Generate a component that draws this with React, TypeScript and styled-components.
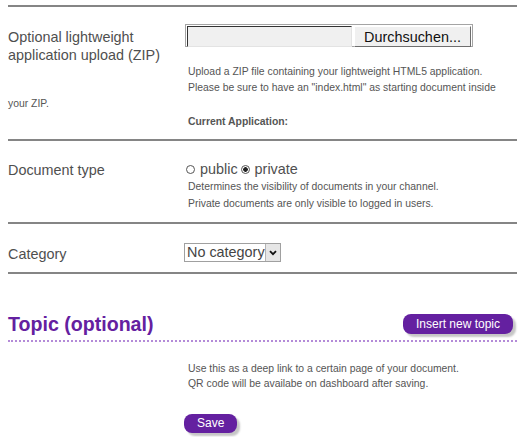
import React, { useRef, useState } from "react";
import styled, { createGlobalStyle } from "styled-components";

const colors = {
  label: "#4f4f4f",
  help: "#555555",
  rule: "#858585",
  purple: "#6420a0",
  dots: "#b48bd8",
  shadow: "#c6c6c6",
  control: "#f0f0f0",
};

const GlobalStyle = createGlobalStyle`
  body {
    margin: 0;
    background: #fff;
    font-family: "Liberation Sans", Arial, sans-serif;
  }
`;

const Page = styled.form`
  width: 509px;
  padding: 5px 7px 20px 8px;
`;

const Rule = styled.hr`
  margin: 0;
  height: 0;
  border: 0;
  border-top: 2px solid ${colors.rule};
`;

const Field = styled.div<{ $top: number; $bottom: number }>`
  display: flow-root;
  padding: ${({ $top }) => $top}px 0 ${({ $bottom }) => $bottom}px;
`;

const Label = styled.label<{ $offset: number; $height?: number }>`
  float: left;
  width: 180px;
  margin-top: ${({ $offset }) => $offset}px;
  height: ${({ $height }) => ($height ? `${$height}px` : "auto")};
  font-size: 14.4px;
  line-height: 18px;
  color: ${colors.label};
`;

const Body = styled.div`
  margin-left: 180px;
`;

const Help = styled.p<{ $line: number; $top?: number; $bold?: boolean }>`
  margin: ${({ $top }) => $top ?? 0}px 0 0;
  font-size: 10.4px;
  line-height: ${({ $line }) => $line}px;
  font-weight: ${({ $bold }) => ($bold ? "bold" : "normal")};
  color: ${colors.help};
`;

/* file upload */
const FileRow = styled.div`
  display: flex;
  height: 23px;
`;

const FileBox = styled.div`
  display: inline-flex;
  gap: 2px;
  margin-left: -3px;
  padding: 1px;
  border: 1px solid #a4a4a4;
  background: #fff;
`;

const FileName = styled.div`
  width: 163px;
  height: 19px;
  background: ${colors.control};
  border-top: 1px solid #333;
  border-left: 1px solid #333;
  border-right: 1px solid #e3e3e3;
  border-bottom: 1px solid #e3e3e3;
`;

const Browse = styled.button`
  width: 117px;
  height: 21px;
  padding: 0;
  background: ${colors.control};
  border: 1px solid;
  border-color: #fff #6e6e6e #6e6e6e #fff;
  font-family: inherit;
  font-size: 14.4px;
  color: #111;
  cursor: pointer;
`;

const HiddenFile = styled.input`
  display: none;
`;

/* document type */
const RadioLine = styled.div`
  display: flex;
  align-items: center;
  height: 18px;
  margin-left: -2px;
  font-size: 14.4px;
  color: ${colors.label};
`;

const Choice = styled.label`
  display: inline-flex;
  align-items: center;
  margin-right: 3px;
  cursor: pointer;
`;

const Radio = styled.input`
  appearance: none;
  box-sizing: border-box;
  width: 9px;
  height: 9px;
  margin: 1px 5px 0 0;
  border: 1px solid #555;
  border-radius: 50%;
  background: #fff;

  &:checked {
    background: radial-gradient(circle, #222 0 2px, #fff 2.6px);
  }
`;

/* category */
const SelectBox = styled.div`
  display: inline-flex;
  box-sizing: border-box;
  width: 97px;
  height: 19px;
  margin-left: -4px;
  border: 1px solid #a0a0a0;
`;

const Select = styled.select`
  appearance: none;
  flex: 1;
  min-width: 0;
  border: 0;
  padding: 0 0 0 2px;
  background: #fff;
  font-family: inherit;
  font-size: 14.4px;
  line-height: 17px;
  color: #444;
  outline: none;
`;

const Arrow = styled.span`
  display: flex;
  align-items: center;
  justify-content: center;
  width: 14px;
  background: #e6e6e6;
  border-left: 1px solid #b4b4b4;
`;

/* topic */
const TopicHead = styled.div`
  display: flex;
  align-items: center;
  justify-content: space-between;
  margin-top: 38px;
  padding: 0 4px 4px 0;
  border-bottom: 2px dotted ${colors.dots};
`;

const Title = styled.h2`
  margin: 0;
  font-size: 19.6px;
  line-height: 24px;
  font-weight: bold;
  color: ${colors.purple};
`;

const Pill = styled.button<{ $h: number }>`
  height: ${({ $h }) => $h}px;
  padding: 0 13px;
  border: 0;
  border-radius: 8px;
  background: ${colors.purple};
  box-shadow: 3px 3px 2px ${colors.shadow};
  font-family: inherit;
  font-size: 12px;
  color: #fff;
  cursor: pointer;
`;

const TopicHelp = styled.div`
  padding-left: 180px;
`;

const SaveRow = styled.div`
  margin: 22px 0 0 176px;
`;

export default function App() {
  const [docType, setDocType] = useState<"public" | "private">("private");
  const [fileName, setFileName] = useState("");
  const fileRef = useRef<HTMLInputElement>(null);

  return (
    <>
      <GlobalStyle />
      <Page onSubmit={(e) => e.preventDefault()}>
        <Rule />
        <Field $top={17} $bottom={9}>
          <Label $offset={4} $height={62}>
            Optional lightweight application upload (ZIP)
          </Label>
          <FileRow>
            <FileBox>
              <FileName title={fileName} />
              <Browse type="button" onClick={() => fileRef.current?.click()}>
                Durchsuchen...
              </Browse>
              <HiddenFile
                ref={fileRef}
                type="file"
                accept=".zip"
                onChange={(e) => setFileName(e.target.files?.[0]?.name ?? "")}
              />
            </FileBox>
          </FileRow>
          <Help $line={16} $top={17}>
            Upload a ZIP file containing your lightweight HTML5 application.
            Please be sure to have an "index.html" as starting document inside
            your ZIP.
          </Help>
          <Body>
            <Help $line={16} $top={2} $bold>
              Current Application:
            </Help>
          </Body>
        </Field>
        <Rule />
        <Field $top={19} $bottom={10}>
          <Label $offset={1}>Document type</Label>
          <Body>
            <RadioLine>
              <Choice>
                <Radio
                  type="radio"
                  name="doctype"
                  checked={docType === "public"}
                  onChange={() => setDocType("public")}
                />
                public
              </Choice>
              <Choice>
                <Radio
                  type="radio"
                  name="doctype"
                  checked={docType === "private"}
                  onChange={() => setDocType("private")}
                />
                private
              </Choice>
            </RadioLine>
            <Help $line={17}>
              Determines the visibility of documents in your channel.
              <br />
              Private documents are only visible to logged in users.
            </Help>
          </Body>
        </Field>
        <Rule />
        <Field $top={19} $bottom={9}>
          <Label $offset={2}>Category</Label>
          <Body>
            <SelectBox>
              <Select defaultValue="none">
                <option value="none">No category</option>
              </Select>
              <Arrow>
                <svg width="8" height="6" viewBox="0 0 8 6">
                  <path d="M1 1.2 L4 4.2 L7 1.2" fill="none" stroke="#111" strokeWidth="1.8" />
                </svg>
              </Arrow>
            </SelectBox>
          </Body>
        </Field>
        <Rule />

        <TopicHead>
          <Title>Topic (optional)</Title>
          <Pill type="button" $h={20}>
            Insert new topic
          </Pill>
        </TopicHead>
        <TopicHelp>
          <Help $line={15} $top={19}>
            Use this as a deep link to a certain page of your document.
            <br />
            QR code will be availabe on dashboard after saving.
          </Help>
        </TopicHelp>
        <SaveRow>
          <Pill type="submit" $h={19}>
            Save
          </Pill>
        </SaveRow>
      </Page>
    </>
  );
}
